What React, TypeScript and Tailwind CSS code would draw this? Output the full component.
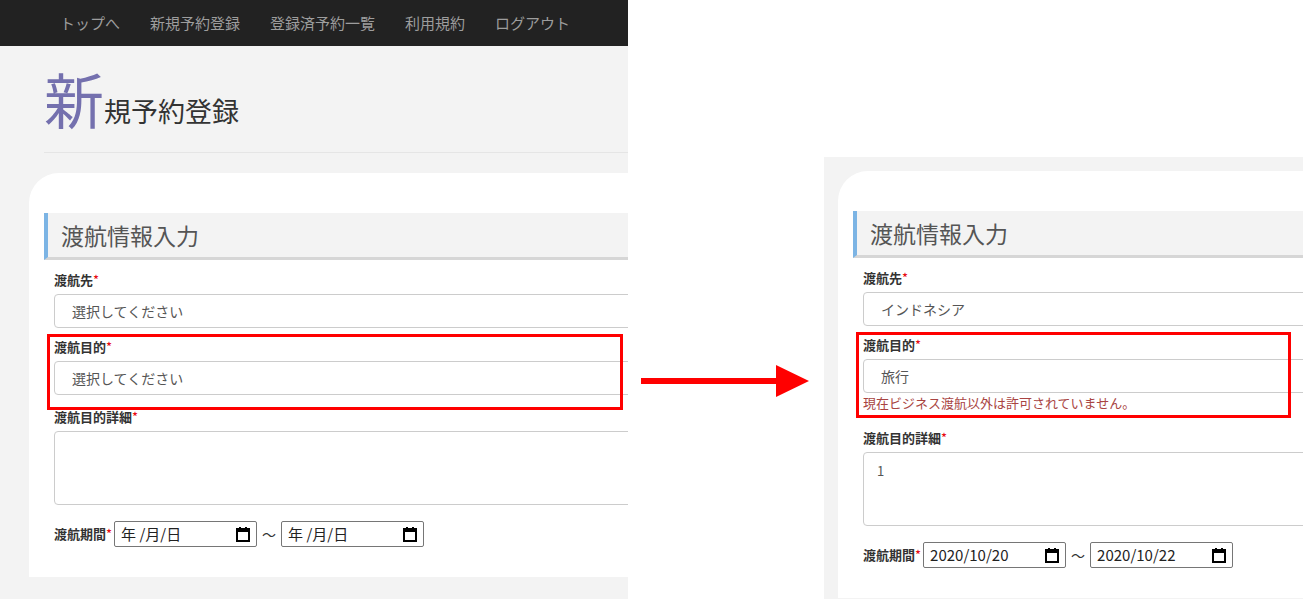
import React from "react";

const F = { fontFamily: '"Noto Sans CJK JP", "Noto Sans", sans-serif' };

function Cal() {
  return (
    <svg width="14" height="15" viewBox="0 0 14 15">
      <rect x="1" y="2" width="12" height="12" fill="none" stroke="#000" strokeWidth="2" />
      <rect x="1" y="2" width="12" height="3" fill="#000" />
      <rect x="3" y="0" width="2" height="3" fill="#000" />
      <rect x="9" y="0" width="2" height="3" fill="#000" />
    </svg>
  );
}

function DateBox({ v }: { v: string }) {
  return (
    <div className="w-[143px] h-[26px] border border-[#767676] rounded-[2px] flex items-center justify-between px-[6px] text-[15px] text-[#222] bg-white">
      <span>{v}</span>
      <Cal />
    </div>
  );
}

function Label({ t }: { t: string }) {
  return (
    <div className="text-[13px] font-bold text-[#333] leading-[18px]">
      {t}
      <span className="text-red-600 font-normal">*</span>
    </div>
  );
}

function Card({ dest, purpose, detail, d1, d2, error }: { dest: string; purpose: string; detail: string; d1: string; d2: string; error?: boolean }) {
  return (
    <div className="bg-white rounded-tl-[30px] w-[700px] pt-[40px] pl-[15px] pb-[30px]">
      <div className="h-[47px] bg-[#f3f3f3] border-l-[4px] border-[#7cb4e4] border-b-[3px] border-b-[#d6d6d6] flex items-center pl-[13px] text-[23px] text-[#555]">
        渡航情報入力
      </div>
      <div className="pl-[10px]">
        <div className="mt-[11px]"><Label t="渡航先" /></div>
        <div className="mt-[5px] h-[34px] border border-[#ccc] rounded-[4px] flex items-center pl-[17px] text-[14px] text-[#555]">{dest}</div>
        <div className={`relative mt-[10px] ${error ? "pb-[2px]" : ""}`}>
          <div className={`absolute -left-[7px] -top-[4px] border-[3px] border-[#ff0000] pointer-events-none ${error ? "w-[435px] h-[86px]" : "w-[576px] h-[76px]"}`} />
          <Label t="渡航目的" />
          <div className="mt-[5px] h-[34px] border border-[#ccc] rounded-[4px] flex items-center pl-[17px] text-[14px] text-[#555]">{purpose}</div>
          {error && <div className="text-[13px] text-[#a94442] leading-[18px] mt-[1px]">現在ビジネス渡航以外は許可されていません。</div>}
        </div>
        <div className={error ? "mt-[15px]" : "mt-[13px]"}><Label t="渡航目的詳細" /></div>
        <div className="mt-[5px] h-[74px] border border-[#ccc] rounded-[4px] pl-[13px] pt-[8px] text-[13px] text-[#555]">{detail}</div>
        <div className="mt-[16px] flex items-center">
          <Label t="渡航期間" />
          <div className="ml-[2px]"><DateBox v={d1} /></div>
          <span className="mx-[5px] text-[14px] text-[#333]">～</span>
          <DateBox v={d2} />
        </div>
      </div>
    </div>
  );
}

export default function App() {
  return (
    <div style={F} className="w-[1303px] h-[599px] bg-white flex overflow-hidden">
      <div className="w-[628px] h-[599px] bg-[#f3f3f3] overflow-hidden shrink-0">
        <div className="h-[46px] bg-[#222] flex items-center pl-[60px] gap-[30px] text-[15px] text-[#9d9d9d]">
          <span>トップへ</span><span>新規予約登録</span><span>登録済予約一覧</span><span>利用規約</span><span>ログアウト</span>
        </div>
        <div className="ml-[44px] mt-[18px] flex items-end h-[64px]">
          <span className="text-[60px] leading-[60px] text-[#7470ae]">新</span>
          <span className="text-[27px] leading-[30px] text-[#333] mb-[2px]">規予約登録</span>
        </div>
        <div className="ml-[44px] mt-[24px] border-t border-[#e5e5e5]" />
        <div className="ml-[29px] mt-[20px]">
          <Card dest="選択してください" purpose="選択してください" detail="" d1="年 /月/日" d2="年 /月/日" />
        </div>
      </div>
      <div className="w-[196px] shrink-0 flex items-center justify-center">
        <svg width="170" height="40" viewBox="0 0 170 40" className="mt-[162px]">
          <rect x="0" y="17" width="140" height="6" fill="#ff0000" />
          <polygon points="135,4 168,20 135,36" fill="#ff0000" />
        </svg>
      </div>
      <div className="mt-[157px] w-[479px] h-[442px] bg-[#f3f3f3] overflow-hidden shrink-0">
        <div className="ml-[14px] mt-[14px]">
          <Card dest="インドネシア" purpose="旅行" detail="1" d1="2020/10/20" d2="2020/10/22" error />
        </div>
      </div>
    </div>
  );
}
